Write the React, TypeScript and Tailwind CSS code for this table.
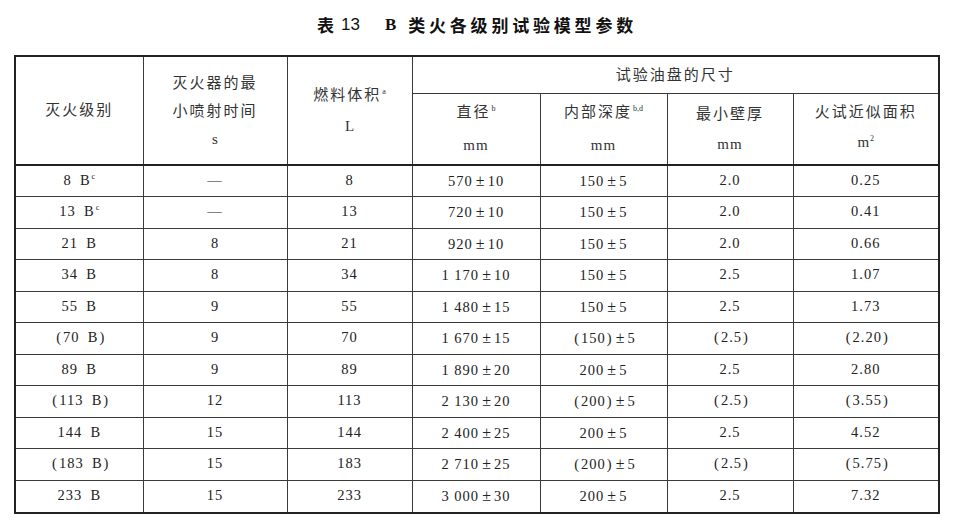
import React from "react";

const serif = { fontFamily: '"Liberation Serif", "Noto Sans CJK SC", serif' };

function Txt({ text }: { text: string }) {
  const out: React.ReactNode[] = [];
  let buf = "";
  const flush = (k: number) => {
    if (buf) {
      out.push(<React.Fragment key={"t" + k}>{buf}</React.Fragment>);
      buf = "";
    }
  };
  Array.from(text).forEach((ch, i) => {
    if (ch === "±") {
      flush(i);
      out.push(
        <span key={i} className="inline-block w-[15px] text-center text-[16px] tracking-normal">
          ±
        </span>
      );
    } else if (ch === "（") {
      flush(i);
      out.push(
        <span key={i} className="inline-block pl-[3px] pr-[2px] tracking-normal">
          (
        </span>
      );
    } else if (ch === "）") {
      flush(i);
      out.push(
        <span key={i} className="inline-block pl-[1px] pr-[1px] tracking-normal">
          )
        </span>
      );
    } else {
      buf += ch;
    }
  });
  flush(999);
  return <>{out}</>;
}

type Row = {
  cls: string;
  sup?: string;
  time: string;
  vol: string;
  dia: string;
  depth: string;
  wall: string;
  area: string;
};

const rows: Row[] = [
  { cls: "8\u2002B", sup: "c", time: "—", vol: "8", dia: "570±10", depth: "150±5", wall: "2.0", area: "0.25" },
  { cls: "13\u2002B", sup: "c", time: "—", vol: "13", dia: "720±10", depth: "150±5", wall: "2.0", area: "0.41" },
  { cls: "21\u2002B", time: "8", vol: "21", dia: "920±10", depth: "150±5", wall: "2.0", area: "0.66" },
  { cls: "34\u2002B", time: "8", vol: "34", dia: "1 170±10", depth: "150±5", wall: "2.5", area: "1.07" },
  { cls: "55\u2002B", time: "9", vol: "55", dia: "1 480±15", depth: "150±5", wall: "2.5", area: "1.73" },
  { cls: "（70\u2002B）", time: "9", vol: "70", dia: "1 670±15", depth: "（150）±5", wall: "（2.5）", area: "（2.20）" },
  { cls: "89\u2002B", time: "9", vol: "89", dia: "1 890±20", depth: "200±5", wall: "2.5", area: "2.80" },
  { cls: "（113\u2002B）", time: "12", vol: "113", dia: "2 130±20", depth: "（200）±5", wall: "（2.5）", area: "（3.55）" },
  { cls: "144\u2002B", time: "15", vol: "144", dia: "2 400±25", depth: "200±5", wall: "2.5", area: "4.52" },
  { cls: "（183\u2002B）", time: "15", vol: "183", dia: "2 710±25", depth: "（200）±5", wall: "（2.5）", area: "（5.75）" },
  { cls: "233\u2002B", time: "15", vol: "233", dia: "3 000±30", depth: "200±5", wall: "2.5", area: "7.32" },
];

const td = "border border-[#3a3a3a] text-center align-middle p-0";
const th = "border border-[#3a3a3a] text-center align-middle p-0 font-normal";

function Sup({ children }: { children: React.ReactNode }) {
  return <span className="text-[8px] relative top-[-6px] ml-[1px] tracking-normal">{children}</span>;
}

export default function App() {
  return (
    <div className="w-[954px] h-[521px] bg-white text-[#222]" style={serif}>
      <div className="h-[40px] pt-[9px] flex justify-center items-center">
        <div
          className="flex items-center text-[17px] font-bold text-[#111]"
          style={{ fontFamily: '"Noto Sans CJK SC", "Liberation Sans", sans-serif' }}
        >
          <span>表</span>
          <span className="ml-[7px] font-normal" style={{ fontFamily: '"Liberation Sans", sans-serif' }}>
            13
          </span>
          <span className="ml-[25px] text-[17px]" style={{ fontFamily: '"Liberation Serif", serif' }}>
            B
          </span>
          <span className="ml-[12px] tracking-[3.8px]">类火各级别试验模型参数</span>
        </div>
      </div>
      <div className="mt-[15px] ml-[14px] w-[926px] border-2 border-[#222]">
        <table className="w-full border-collapse border-hidden table-fixed text-[14.5px]">
          <colgroup>
            <col className="w-[127px]" />
            <col className="w-[144px]" />
            <col className="w-[125px]" />
            <col className="w-[128px]" />
            <col className="w-[127px]" />
            <col className="w-[126px]" />
            <col />
          </colgroup>
          <thead className="text-[15px] text-[#333]">
            <tr className="h-[36px]">
              <th rowSpan={2} className={`${th} border-b-2 border-b-[#222]`}>
                <span className="tracking-[2px]">灭火级别</span>
              </th>
              <th rowSpan={2} className={`${th} border-b-2 border-b-[#222] leading-[28px]`}>
                <div className="tracking-[2px]">灭火器的最</div>
                <div className="tracking-[2px]">小喷射时间</div>
                <div>s</div>
              </th>
              <th rowSpan={2} className={`${th} border-b-2 border-b-[#222] leading-[29px]`}>
                <div className="tracking-[2px]">
                  燃料体积<Sup>a</Sup>
                </div>
                <div>L</div>
              </th>
              <th colSpan={4} className={th}>
                <span className="tracking-[2px]">试验油盘的尺寸</span>
              </th>
            </tr>
            <tr className="h-[72px] leading-[30px]">
              <th className={`${th} border-b-2 border-b-[#222]`}>
                <div className="tracking-[2px]">
                  直径<Sup>b</Sup>
                </div>
                <div className="tracking-[1px]">mm</div>
              </th>
              <th className={`${th} border-b-2 border-b-[#222]`}>
                <div className="tracking-[2px]">
                  内部深度<Sup>b,d</Sup>
                </div>
                <div className="tracking-[1px]">mm</div>
              </th>
              <th className={`${th} border-b-2 border-b-[#222]`}>
                <div className="tracking-[2px]">最小壁厚</div>
                <div className="tracking-[1px]">mm</div>
              </th>
              <th className={`${th} border-b-2 border-b-[#222]`}>
                <div className="tracking-[2px]">火试近似面积</div>
                <div>
                  m<Sup>2</Sup>
                </div>
              </th>
            </tr>
          </thead>
          <tbody className="tracking-[1px]">
            {rows.map((r, i) => (
              <tr key={i} className="h-[31.5px]">
                <td className={td}>
                  <Txt text={r.cls} />
                  {r.sup && <Sup>{r.sup}</Sup>}
                </td>
                <td className={td}>{r.time}</td>
                <td className={td}>{r.vol}</td>
                <td className={td}>
                  <Txt text={r.dia} />
                </td>
                <td className={td}>
                  <Txt text={r.depth} />
                </td>
                <td className={td}>
                  <Txt text={r.wall} />
                </td>
                <td className={td}>
                  <Txt text={r.area} />
                </td>
              </tr>
            ))}
          </tbody>
        </table>
      </div>
    </div>
  );
}
